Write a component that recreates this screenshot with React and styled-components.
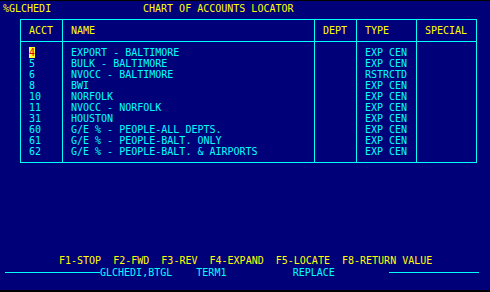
import React from "react";
import styled, { createGlobalStyle } from "styled-components";

const GlobalStyle = createGlobalStyle`
  html, body {
    margin: 0;
    padding: 0;
    background: #000000;
  }
`;

const Screen = styled.div`
  margin-top: 1px;
  width: 490px;
  height: 289px;
  background: #000078;
  font-family: "DejaVu Sans Mono", "Liberation Mono", monospace;
  font-size: 10px;
  line-height: 11px;
  white-space: pre;
  overflow: hidden;
  display: flex;
  flex-direction: column;
`;

const TitleBar = styled.div`
  display: flex;
  padding: 2px 0 0 3px;
  height: 16px;
  color: #ffff00;
`;

const ProgramId = styled.span`
  width: 140px;
`;

const Table = styled.div`
  margin-left: 20px;
  width: 455px;
  border: 1px solid #00ffff;
`;

const Row = styled.div`
  display: grid;
  grid-template-columns: 41px 252px 42px 60px 60px;
  color: ${(props) => (props.$head ? "#ffff00" : "#00ffff")};
  border-bottom: ${(props) => (props.$head ? "1px solid #00ffff" : "none")};
  & > * {
    padding-top: ${(props) => (props.$head ? "5px" : "0")};
    padding-bottom: ${(props) => (props.$head ? "5px" : "0")};
  }
  &.first > * {
    padding-top: 5px;
  }
  &.last > * {
    padding-bottom: 5px;
  }
`;

const Cell = styled.div`
  padding-left: 8px;
  height: 11px;
  & + & {
    border-left: 1px solid #00ffff;
  }
`;

const Cursor = styled.span`
  display: inline-block;
  background: #ffff30;
  color: #e00000;
`;

const Footer = styled.div`
  margin-top: auto;
  margin-bottom: 12px;
`;

const Keys = styled.div`
  color: #ffff00;
  padding-left: 59px;
  margin-bottom: 1px;
`;

const StatusLine = styled.div`
  display: flex;
  align-items: center;
  color: #00ffff;
`;

const Rule = styled.span`
  height: 1px;
  background: #00ffff;
  width: ${(props) => props.$w}px;
  margin-left: ${(props) => props.$ml || 0}px;
`;

const accounts = [
  { acct: "4", name: "EXPORT - BALTIMORE", type: "EXP CEN" },
  { acct: "5", name: "BULK - BALTIMORE", type: "EXP CEN" },
  { acct: "6", name: "NVOCC - BALTIMORE", type: "RSTRCTD" },
  { acct: "8", name: "BWI", type: "EXP CEN" },
  { acct: "10", name: "NORFOLK", type: "EXP CEN" },
  { acct: "11", name: "NVOCC - NORFOLK", type: "EXP CEN" },
  { acct: "31", name: "HOUSTON", type: "EXP CEN" },
  { acct: "60", name: "G/E % - PEOPLE-ALL DEPTS.", type: "EXP CEN" },
  { acct: "61", name: "G/E % - PEOPLE-BALT. ONLY", type: "EXP CEN" },
  { acct: "62", name: "G/E % - PEOPLE-BALT. & AIRPORTS", type: "EXP CEN" },
];

const App = () => {
  return (
    <>
      <GlobalStyle />
      <Screen>
        <TitleBar>
          <ProgramId>%GLCHEDI</ProgramId>
          <span>CHART OF ACCOUNTS LOCATOR</span>
        </TitleBar>
        <Table>
          <Row $head>
            <Cell>ACCT</Cell>
            <Cell>NAME</Cell>
            <Cell>DEPT</Cell>
            <Cell>TYPE</Cell>
            <Cell>SPECIAL</Cell>
          </Row>
          {accounts.map((a, i) => (
            <Row
              key={a.acct}
              className={i === 0 ? "first" : i === accounts.length - 1 ? "last" : ""}
            >
              <Cell>{i === 0 ? <Cursor>{a.acct}</Cursor> : a.acct}</Cell>
              <Cell>{a.name}</Cell>
              <Cell />
              <Cell>{a.type}</Cell>
              <Cell />
            </Row>
          ))}
        </Table>
        <Footer>
          <Keys>F1-STOP  F2-FWD  F3-REV  F4-EXPAND  F5-LOCATE  F8-RETURN VALUE</Keys>
          <StatusLine>
            <Rule $w={95} $ml={5} />
            <span>GLCHEDI,BTGL    TERM1           REPLACE</span>
            <Rule $w={90} $ml={54} />
          </StatusLine>
        </Footer>
      </Screen>
    </>
  );
};

export default App;
